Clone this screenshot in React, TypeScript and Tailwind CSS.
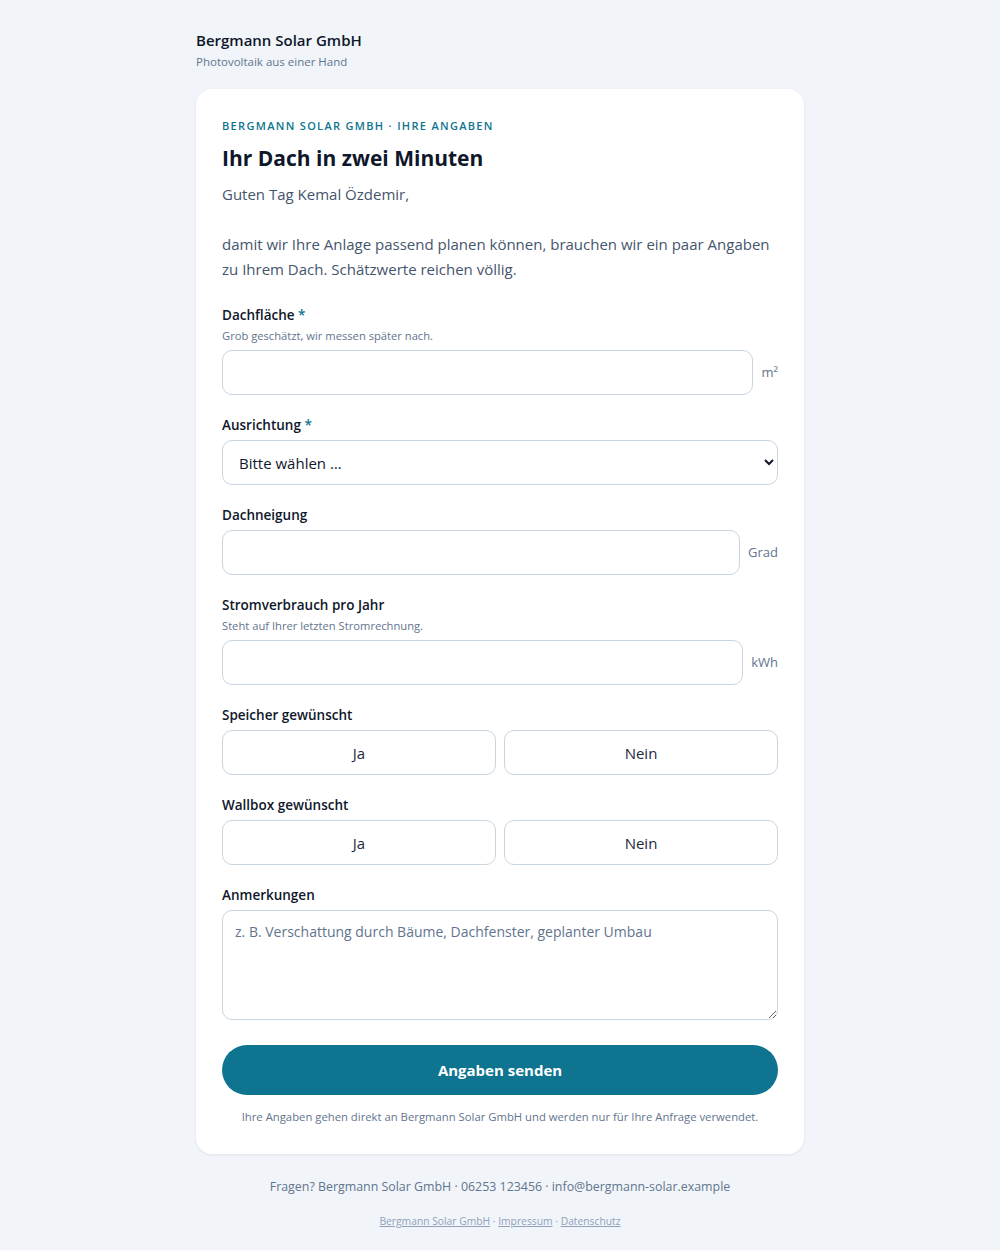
import React from 'react'

const font = { fontFamily: '"Open Sans", "Noto Sans", sans-serif' }

function Label({ text, required, hint }: { text: string; required?: boolean; hint?: string }) {
  return (
    <div className={hint ? 'mb-[6px]' : 'mb-[5px]'}>
      <div className="text-[13.5px] font-semibold text-slate-900 leading-5">
        {text}
        {required && <span className="text-[#0e7490]"> *</span>}
      </div>
      {hint && <div className="text-[11.2px] text-slate-500 mt-[3px] leading-4">{hint}</div>}
    </div>
  )
}

function UnitInput({ unit }: { unit: string }) {
  return (
    <div className="flex items-center gap-2">
      <input className="flex-1 h-[45px] rounded-[10px] border border-slate-300 bg-white px-4 text-[15px]" />
      <span className="text-[13px] text-slate-500">{unit}</span>
    </div>
  )
}

function Toggle() {
  return (
    <div className="grid grid-cols-2 gap-2">
      <button className="h-[45px] rounded-[10px] border border-slate-300 bg-white text-[15px] text-slate-800">Ja</button>
      <button className="h-[45px] rounded-[10px] border border-slate-300 bg-white text-[15px] text-slate-800">Nein</button>
    </div>
  )
}

export default function App() {
  return (
    <div className="min-h-screen bg-[#f1f5f9] pt-[30px] pb-6" style={font}>
      <div className="w-[608px] mx-auto">
        <div className="mb-[19px]">
          <div className="text-[15px] font-semibold text-slate-900 leading-5">Bergmann Solar GmbH</div>
          <div className="text-[11.5px] text-slate-500 mt-[3px]">Photovoltaik aus einer Hand</div>
        </div>

        <div className="bg-white rounded-2xl shadow-[0_1px_3px_rgba(15,23,42,0.08)] px-[26px] pt-[29px] pb-[28px]">
          <div className="text-[11px] font-semibold uppercase tracking-[0.12em] text-[#0e7490] leading-4">
            Bergmann Solar GmbH · Ihre Angaben
          </div>
          <h1 className="text-[21px] font-bold text-slate-900 mt-[10px] leading-7">Ihr Dach in zwei Minuten</h1>
          <div className="text-[15px] text-slate-600 leading-[25px] mt-[10px]">
            <p>Guten Tag Kemal Özdemir,</p>
            <p className="mt-[25px]">
              damit wir Ihre Anlage passend planen können, brauchen wir ein paar Angaben zu Ihrem Dach. Schätzwerte reichen völlig.
            </p>
          </div>

          <div className="mt-[23px] flex flex-col gap-[20px]">
            <div>
              <Label text="Dachfläche" required hint="Grob geschätzt, wir messen später nach." />
              <UnitInput unit="m²" />
            </div>
            <div>
              <Label text="Ausrichtung" required />
              <select className="w-full h-[45px] rounded-[10px] border border-slate-300 bg-white px-3 text-[15px] text-slate-900">
                <option>Bitte wählen …</option>
              </select>
            </div>
            <div>
              <Label text="Dachneigung" />
              <UnitInput unit="Grad" />
            </div>
            <div>
              <Label text="Stromverbrauch pro Jahr" hint="Steht auf Ihrer letzten Stromrechnung." />
              <UnitInput unit="kWh" />
            </div>
            <div>
              <Label text="Speicher gewünscht" />
              <Toggle />
            </div>
            <div>
              <Label text="Wallbox gewünscht" />
              <Toggle />
            </div>
            <div>
              <Label text="Anmerkungen" />
              <textarea
                className="w-full h-[110px] rounded-[10px] border border-slate-300 bg-white px-3 py-[10px] text-[14px] placeholder:text-slate-500 block"
                placeholder="z. B. Verschattung durch Bäume, Dachfenster, geplanter Umbau"
              />
            </div>
          </div>

          <button className="mt-[25px] w-full h-[50px] rounded-full bg-[#0e7490] text-white text-[15px] font-bold">
            Angaben senden
          </button>
          <p className="text-center text-[11.3px] text-slate-500 mt-[14px]">
            Ihre Angaben gehen direkt an Bergmann Solar GmbH und werden nur für Ihre Anfrage verwendet.
          </p>
        </div>

        <div className="text-center mt-[24px]">
          <div className="text-[12.4px] text-slate-500">Fragen? Bergmann Solar GmbH · 06253 123456 · info@bergmann-solar.example</div>
          <div className="text-[10.3px] text-slate-400 mt-[17px]">
            <a className="underline">Bergmann Solar GmbH</a> · <a className="underline">Impressum</a> ·{' '}
            <a className="underline">Datenschutz</a>
          </div>
        </div>
      </div>
    </div>
  )
}
